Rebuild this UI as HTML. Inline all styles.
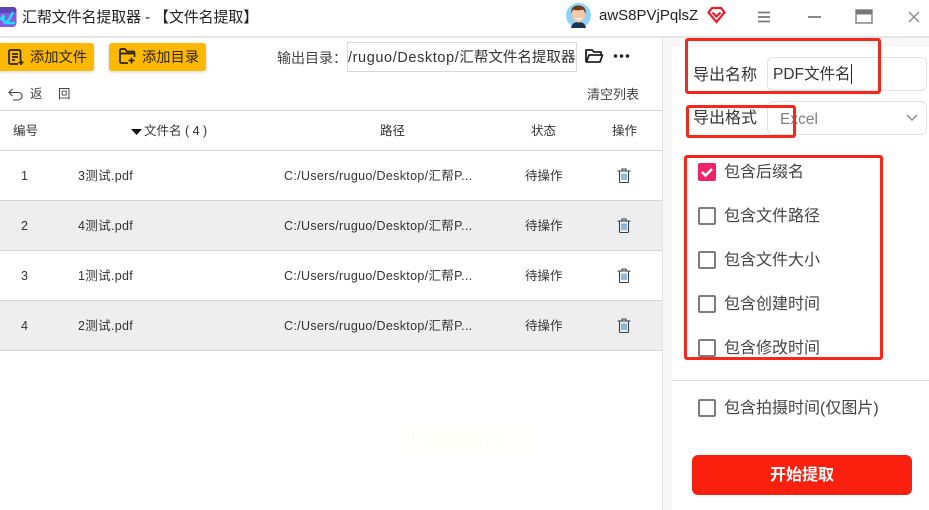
<!DOCTYPE html>
<html lang="zh"><head><meta charset="utf-8"><style>
html,body{margin:0;padding:0;width:929px;height:510px;overflow:hidden;background:#fff;font-family:"Liberation Sans","Noto Sans CJK SC",sans-serif;color:#333}
div,span,svg{position:absolute;box-sizing:border-box;white-space:nowrap}
span.i{position:static}
.t{line-height:20px;height:20px}
.c{text-align:center}
.btn{background:#fdb900;border-radius:3px;height:28px;top:43px;box-shadow:0 1px 3px rgba(0,0,0,.18)}
.row{left:0;width:662px;height:50px;border-bottom:1px solid #d4d4d4;font-size:12.5px;color:#333}
.row div{top:15px}
.g{background:#eee}
.ls{letter-spacing:.33px}
.cb{left:698px;width:18px;height:18px;border:2px solid #7c7c7c;border-radius:2px;background:#fff}
.lb{left:724px;font-size:16px;color:#444}
.rb{border:3px solid #f9261c;border-radius:3px;background:transparent}
</style></head><body>
<!-- title bar -->
<div style="left:0;top:36px;width:929px;height:2px;background:#e6e6e6"></div>
<svg style="left:0;top:7px" width="17" height="20" viewBox="0 0 17 20"><rect x="-4" y="0" width="20.500" height="20" rx="4" fill="#8a55e8"/><rect x="-4" y="0" width="20.500" height="6" rx="3" fill="#5a44b8"/><path d="M0 12h3l2 4h10M7 15l3-4 3-6" stroke="#1fe0f0" stroke-width="2.600" fill="none"/><circle cx="3" cy="10" r="2.200" fill="#1fe0f0"/></svg>
<div class="t" style="left:22px;top:8px;font-size:15px;letter-spacing:-.12px;color:#222">汇帮文件名提取器 - 【文件名提取】</div>
<svg style="left:566px;top:3px" width="25" height="25" viewBox="0 0 25 25"><circle cx="12.500" cy="12.500" r="12.500" fill="#8ed3f4"/><path d="M5 25c1-5 4-6 7.500-6s6.500 1 7.500 6z" fill="#1e3350"/><ellipse cx="12.500" cy="12" rx="6.500" ry="7.500" fill="#f6c9a5"/><path d="M5.500 11c-1-7 3-8.500 7-8.500s8 2 7 8.500c-1-3-2-4-3-4.500-3 1-7 1-9 0-1 1-1.500 2-2 4.500z" fill="#6c3a1e"/><path d="M9 15q3.500 3 7 0q-3.500 1-7 0z" fill="#fff" stroke="#fff"/></svg>
<div class="t" style="left:599px;top:6px;font-size:15px;color:#222">awS8PVjPqlsZ</div>
<svg style="left:707px;top:6px" width="19" height="18" viewBox="0 0 19 18"><path d="M5 2h9l3.500 4.500L9.500 16 1.500 6.500z" fill="none" stroke="#ee1b2e" stroke-width="2.200"/><path d="M5.500 6.500l4 4 4-4" fill="none" stroke="#ee1b2e" stroke-width="2.200"/></svg>
<svg style="left:757px;top:11px" width="14" height="12" viewBox="0 0 14 12"><path d="M1 1.500h12M1 6h12M1 10.500h12" stroke="#777" stroke-width="1.800"/></svg>
<div style="left:808px;top:16px;width:13px;height:2px;background:#888"></div>
<svg style="left:855px;top:9px" width="18" height="15" viewBox="0 0 18 15"><rect x="1" y="1" width="16" height="13" fill="none" stroke="#888" stroke-width="1.500"/><rect x="1" y="1" width="16" height="4.500" fill="#777"/></svg>
<svg style="left:908px;top:11px" width="12" height="12" viewBox="0 0 12 12"><path d="M1 1l10 10M11 1L1 11" stroke="#888" stroke-width="1.300"/></svg>
<!-- toolbar -->
<div class="btn" style="left:-6px;width:100px"></div>
<svg style="left:7px;top:49px" width="17" height="17" viewBox="0 0 17 17"><path d="M11 15H3.500Q2 15 2 13.500V2.500Q2 1 3.500 1H12Q13.500 1 13.500 2.500V11M5 5h6M5 8h6M5 11h3" fill="none" stroke="#2c2208" stroke-width="1.700"/><path d="M14 11v5M11.500 13.500h5" stroke="#2c2208" stroke-width="1.700"/></svg>
<div class="t" style="left:30px;top:48px;font-size:14.250px;color:#2b2407">添加文件</div>
<div class="btn" style="left:109px;width:97px"></div>
<svg style="left:119px;top:48px" width="17" height="17" viewBox="0 0 17 17"><path d="M9 15H2.500Q1 15 1 13.500V2.500Q1 1 2.500 1H6L8 3.500H14Q15.500 3.500 15.500 5V9M1 5.500H15" fill="none" stroke="#2c2208" stroke-width="1.700"/><path d="M12.500 9.500v6M9.500 12.500h6" stroke="#2c2208" stroke-width="1.700"/></svg>
<div class="t" style="left:142px;top:48px;font-size:14.250px;color:#2b2407">添加目录</div>
<div class="t" style="left:277px;top:48px;font-size:14px;color:#444">输出目录：</div>
<div style="left:347px;top:42px;width:230px;height:30px;border:1px solid #d9d9d9;overflow:hidden"><div class="t" style="left:0;top:5px;font-size:14.500px;color:#333"><span class="i" style="letter-spacing:.6px">/ruguo/Desktop/</span>汇帮文件名提取器</div></div>
<svg style="left:584px;top:48px" width="20" height="16" viewBox="0 0 20 16"><path d="M2 14V2h6l2 2h7v3M2 14h14l2.500-7H5L2.500 14" fill="none" stroke="#222" stroke-width="1.800" stroke-linejoin="round"/></svg>
<svg style="left:613px;top:53px" width="18" height="6" viewBox="0 0 18 6"><circle cx="2.500" cy="3" r="1.800" fill="#222"/><circle cx="8.500" cy="3" r="1.800" fill="#222"/><circle cx="14.500" cy="3" r="1.800" fill="#222"/></svg>
<svg style="left:8px;top:88px" width="15" height="13" viewBox="0 0 15 13"><path d="M4.500 1L1 4.500 4.500 8M1 4.500h9Q14 4.500 14 8t-4 4H5" fill="none" stroke="#444" stroke-width="1.100"/></svg>
<div class="t" style="left:30px;top:84px;font-size:12.500px;color:#444">返</div>
<div class="t" style="left:58px;top:84px;font-size:12.500px;color:#444">回</div>
<div class="t" style="left:587px;top:85px;font-size:13px;color:#444">清空列表</div>
<!-- table head -->
<div style="left:0;top:110px;width:662px;height:41px;border-top:1px solid #d4d4d4;border-bottom:1px solid #d4d4d4"></div>
<div class="t" style="left:13px;top:121px;font-size:12.500px">编号</div>
<svg style="left:131px;top:129px" width="11" height="6" viewBox="0 0 11 6"><path d="M0 0h11L5.500 6z" fill="#111"/></svg>
<div class="t" style="left:144px;top:121px;font-size:12.500px">文件名 ( 4 )</div>
<div class="t" style="left:380px;top:121px;font-size:12.500px">路径</div>
<div class="t" style="left:531px;top:121px;font-size:12.500px">状态</div>
<div class="t" style="left:612px;top:121px;font-size:12.500px">操作</div>
<!-- rows -->
<div class="row" style="top:151px"><div class="t" style="left:21px">1</div><div class="t ls" style="left:78px">3测试.pdf</div><div class="t ls" style="left:284px">C:/Users/ruguo/Desktop/汇帮P...</div><div class="t" style="left:525px">待操作</div></div>
<div class="row g" style="top:201px"><div class="t" style="left:21px">2</div><div class="t ls" style="left:78px">4测试.pdf</div><div class="t ls" style="left:284px">C:/Users/ruguo/Desktop/汇帮P...</div><div class="t" style="left:525px">待操作</div></div>
<div class="row" style="top:251px"><div class="t" style="left:21px">3</div><div class="t ls" style="left:78px">1测试.pdf</div><div class="t ls" style="left:284px">C:/Users/ruguo/Desktop/汇帮P...</div><div class="t" style="left:525px">待操作</div></div>
<div class="row g" style="top:301px"><div class="t" style="left:21px">4</div><div class="t ls" style="left:78px">2测试.pdf</div><div class="t ls" style="left:284px">C:/Users/ruguo/Desktop/汇帮P...</div><div class="t" style="left:525px">待操作</div></div>
<svg style="left:617px;top:168px" width="14" height="15" viewBox="0 0 14 15"><path d="M0.500 3h13M5 3V1h4v2M2.500 3v10.500q0 1 1 1h7q1 0 1-1V3" fill="none" stroke="#3a3f45" stroke-width="1.100"/><path d="M5 5.500v6.500M7 5.500v6.500M9 5.500v6.500" stroke="#4a90c8" stroke-width="1.200"/></svg>
<svg style="left:617px;top:218px" width="14" height="15" viewBox="0 0 14 15"><path d="M0.500 3h13M5 3V1h4v2M2.500 3v10.500q0 1 1 1h7q1 0 1-1V3" fill="none" stroke="#3a3f45" stroke-width="1.100"/><path d="M5 5.500v6.500M7 5.500v6.500M9 5.500v6.500" stroke="#4a90c8" stroke-width="1.200"/></svg>
<svg style="left:617px;top:268px" width="14" height="15" viewBox="0 0 14 15"><path d="M0.500 3h13M5 3V1h4v2M2.500 3v10.500q0 1 1 1h7q1 0 1-1V3" fill="none" stroke="#3a3f45" stroke-width="1.100"/><path d="M5 5.500v6.500M7 5.500v6.500M9 5.500v6.500" stroke="#4a90c8" stroke-width="1.200"/></svg>
<svg style="left:617px;top:318px" width="14" height="15" viewBox="0 0 14 15"><path d="M0.500 3h13M5 3V1h4v2M2.500 3v10.500q0 1 1 1h7q1 0 1-1V3" fill="none" stroke="#3a3f45" stroke-width="1.100"/><path d="M5 5.500v6.500M7 5.500v6.500M9 5.500v6.500" stroke="#4a90c8" stroke-width="1.200"/></svg>
<!-- watermark -->
<div style="left:397px;top:422px;width:137px;height:34px;background:#fffffb"></div>
<div style="left:408px;top:428px;font-family:'Liberation Serif',serif;font-size:19.500px;line-height:24px;color:#fdfdf8">1768369192</div>
<!-- right panel -->
<div style="left:662px;top:38px;width:10px;height:472px;background:#f7f7f7;border-left:1px solid #e4e4e4"></div>
<div style="left:672px;top:38px;width:257px;height:9px;background:#f7f7f7"></div>
<div style="left:672px;top:47px;width:257px;height:463px;background:#fff;border-radius:6px 0 0 0"></div>
<div class="t" style="left:693px;top:66px;font-size:16px;color:#333">导出名称</div>
<div style="left:767px;top:57px;width:160px;height:34px;border:1px solid #e2e2e2;border-radius:6px"></div>
<div class="t" style="left:773px;top:65px;font-size:15.500px;color:#333">PDF文件名</div>
<div style="left:851px;top:64px;width:1px;height:20px;background:#222"></div>
<div class="t" style="left:693px;top:109px;font-size:16px;color:#333">导出格式</div>
<div style="left:767px;top:101px;width:160px;height:34px;border:1px solid #e2e2e2;border-radius:6px"></div>
<div class="t" style="left:780px;top:110px;font-size:15.500px;color:#7f7f7f">Excel</div>
<svg style="left:906px;top:114px" width="12" height="8" viewBox="0 0 12 8"><path d="M1 1l5 5 5-5" fill="none" stroke="#999" stroke-width="1.600"/></svg>
<div class="cb" style="top:163px;background:#ee2466;border-color:#ee2466"></div>
<svg style="left:698px;top:163px" width="18" height="18" viewBox="0 0 18 18"><path d="M4 9l3.500 3.500L14 6" fill="none" stroke="#fff" stroke-width="2.600"/></svg>
<div class="t lb" style="top:163px">包含后缀名</div>
<div class="cb" style="top:207px"></div><div class="t lb" style="top:207px">包含文件路径</div>
<div class="cb" style="top:251px"></div><div class="t lb" style="top:251px">包含文件大小</div>
<div class="cb" style="top:295px"></div><div class="t lb" style="top:295px">包含创建时间</div>
<div class="cb" style="top:339px"></div><div class="t lb" style="top:339px">包含修改时间</div>
<div style="left:672px;top:380px;width:257px;height:1px;background:#dcdcdc"></div>
<div class="cb" style="top:399px"></div><div class="t lb" style="top:399px">包含拍摄时间(仅图片)</div>
<div style="left:692px;top:455px;width:220px;height:40px;background:#f9200e;border-radius:6px"></div>
<div class="t c" style="left:692px;top:466px;width:220px;font-size:16px;font-weight:700;color:#fff">开始提取</div>
<!-- red annotation boxes -->
<div class="rb" style="left:685px;top:38px;width:196px;height:56px"></div>
<div class="rb" style="left:686px;top:105px;width:110px;height:33px"></div>
<div class="rb" style="left:684px;top:155px;width:199px;height:205px"></div>
</body></html>
